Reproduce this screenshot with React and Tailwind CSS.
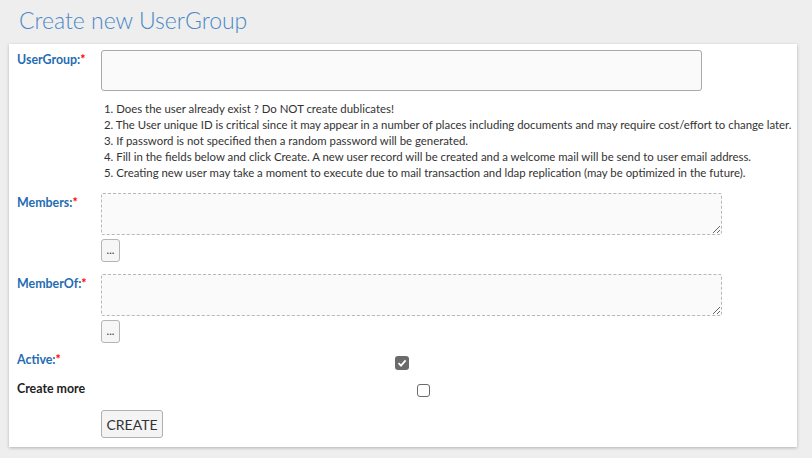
import React from "react";

const Label = ({ children, required = true, blue = true }) => (
  <div className={`whitespace-nowrap text-[12.4px] font-bold leading-[16px] ${blue ? "text-[#1f6cb3]" : "text-[#222]"}`}>
    {children}
    {required && <span className="text-[#ff0000]">*</span>}
  </div>
);

const DotsButton = () => (
  <button className="mt-[4px] h-[23px] w-[19px] rounded-[3px] border border-[#b4b4b4] bg-[#f6f6f6] text-[11px] leading-none text-[#333] flex items-end justify-center pb-[6px]">
    ...
  </button>
);

const Area = () => (
  <textarea className="block h-[42px] w-[621px] resize rounded-[2px] border border-dashed border-[#b8b8b8] bg-[#fafafa] outline-none" />
);

export default function App() {
  return (
    <div className="min-h-[458px] w-[812px] bg-[#eeeeee] pt-[5px]" style={{ fontFamily: 'Lato, "Open Sans", sans-serif' }}>
      <h1 className="pl-[19px] text-[23px] font-light leading-[30px] text-[#4b88c6]">
        Create new UserGroup
      </h1>
      <div className="ml-[9px] mt-[9px] w-[788px] bg-white pb-[9px] pl-[8px] pt-[6px] shadow-[0_1px_3px_rgba(0,0,0,0.25)]">
        <div className="grid grid-cols-[84px_1fr]">
          <div className="pt-[2px]"><Label>UserGroup:</Label></div>
          <div>
            <input className="block h-[41px] w-[601px] rounded-[3px] border border-[#a9a9a9] bg-[#fafafa] outline-none" />
            <div className="mt-[10px] whitespace-nowrap pl-[3px] text-[11.4px] leading-[16px] text-[#333]">
              <div>1. Does the user already exist ? Do NOT create dublicates!</div>
              <div>2. The User unique ID is critical since it may appear in a number of places including documents and may require cost/effort to change later.</div>
              <div>3. If password is not specified then a random password will be generated.</div>
              <div>4. Fill in the fields below and click Create. A new user record will be created and a welcome mail will be send to user email address.</div>
              <div>5. Creating new user may take a moment to execute due to mail transaction and ldap replication (may be optimized in the future).</div>
            </div>
          </div>

          <div className="mt-[12px] pt-[2px]"><Label>Members:</Label></div>
          <div className="mt-[12px]">
            <Area />
            <DotsButton />
          </div>

          <div className="mt-[12px] pt-[2px]"><Label>MemberOf:</Label></div>
          <div className="mt-[12px]">
            <Area />
            <DotsButton />
          </div>

          <div className="mt-[9px]"><Label>Active:</Label></div>
          <div className="mt-[13px] pl-[294px]">
            <div className="flex h-[14px] w-[14px] items-center justify-center rounded-[3px] bg-[#6b6b6b]">
              <svg width="10" height="10" viewBox="0 0 10 10"><path d="M1.5 5.2 L4 7.6 L8.6 2.4" stroke="white" strokeWidth="1.8" fill="none" /></svg>
            </div>
          </div>

          <div className="mt-[11px]"><Label required={false} blue={false}>Create more</Label></div>
          <div className="mt-[14px] pl-[316px]">
            <div className="h-[13px] w-[13px] rounded-[3px] border border-[#6b6b6b] bg-white" />
          </div>

          <div />
          <div className="mt-[13px]">
            <button className="h-[28px] w-[62px] rounded-[3px] border border-[#b0b0b0] bg-[#f4f4f4] text-[14px] text-[#333]">
              CREATE
            </button>
          </div>
        </div>
      </div>
    </div>
  );
}
